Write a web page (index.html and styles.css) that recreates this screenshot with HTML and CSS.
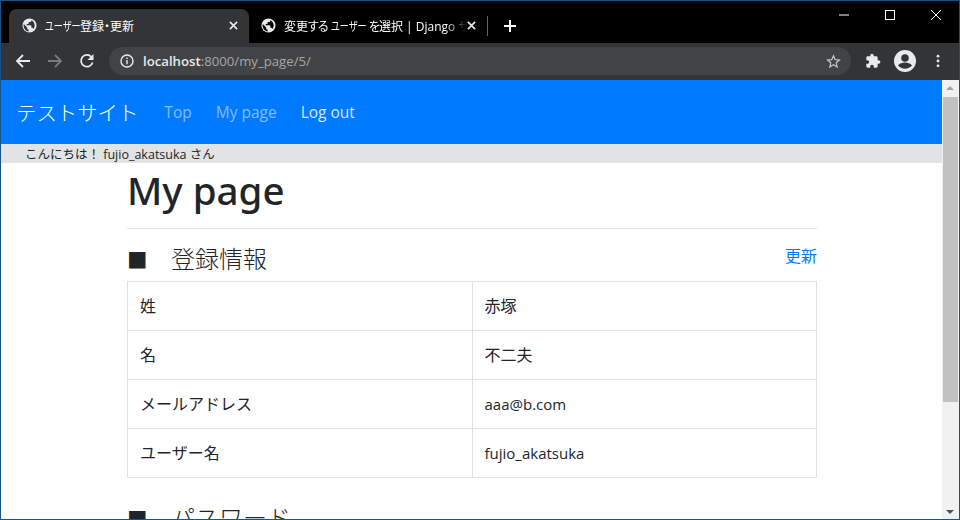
FILE: index.html
```html
<!DOCTYPE html>
<html lang="ja">
<head>
<meta charset="utf-8">
<title>ユーザー登録・更新</title>
<link rel="stylesheet" href="styles.css">
</head>
<body>
<div class="window">
  <div class="titlebar">
    <div class="tab tab-active">
      <svg class="globe" viewBox="0 0 16 16"><circle cx="8" cy="8" r="7.5" fill="#e8eaed"/><path d="M7 14.400C4 14 1.700 11.200 1.700 8c0-.6.1-1 .2-1.500L5.500 10v.8c0 .8.7 1.500 1.500 1.500zM12 11.500c-.2-.6-.7-1-1.300-1H10V8.400c0-.4-.3-.7-.7-.7H5V6.300h1.400c.4 0 .7-.3.700-.7V4.200h1.400c.8 0 1.400-.6 1.400-1.400v-.3c2.100.9 3.600 3 3.600 5.500 0 1.400-.5 2.700-1.500 3.500z" fill="#333436"/></svg>
      <span class="tab-title"><span class="kana">ユーザー</span>登録・更新</span>
      <svg class="tab-x" viewBox="0 0 10 10"><path d="M1 1l8 8M9 1l-8 8" stroke="#e8eaed" stroke-width="1.800"/></svg>
    </div>
    <div class="tab tab-other">
      <svg class="globe" viewBox="0 0 16 16"><circle cx="8" cy="8" r="7.5" fill="#e8eaed"/><path d="M7 14.400C4 14 1.700 11.200 1.700 8c0-.6.1-1 .2-1.500L5.500 10v.8c0 .8.7 1.500 1.500 1.500zM12 11.500c-.2-.6-.7-1-1.300-1H10V8.400c0-.4-.3-.7-.7-.7H5V6.300h1.400c.4 0 .7-.3.700-.7V4.200h1.400c.8 0 1.400-.6 1.400-1.400v-.3c2.100.9 3.600 3 3.600 5.500 0 1.400-.5 2.700-1.500 3.500z" fill="#000"/></svg>
      <span class="tab-title tab-fade">変更<span class="tight">する</span> <span class="kana">ユーザー</span> <span class="tight">を</span>選択 | Django サイト管理</span>
      <svg class="tab-x" viewBox="0 0 10 10"><path d="M1 1l8 8M9 1l-8 8" stroke="#e8eaed" stroke-width="1.800"/></svg>
    </div>
    <span class="tab-sep"></span>
    <svg class="new-tab" viewBox="0 0 12 12"><path d="M6 0v12M0 6h12" stroke="#fff" stroke-width="2"/></svg>
    <div class="win-controls">
      <svg viewBox="0 0 12 12"><path d="M1 6h10" stroke="#fff" stroke-width="1"/></svg>
      <svg viewBox="0 0 12 12"><rect x="1.500" y="1.500" width="9" height="9" fill="none" stroke="#fff"/></svg>
      <svg viewBox="0 0 12 12"><path d="M1 1l10 10M11 1L1 11" stroke="#fff" stroke-width="1"/></svg>
    </div>
  </div>
  <div class="toolbar">
    <svg class="tool" viewBox="0 0 16 16"><path d="M15 8H2M8 2L2 8l6 6" fill="none" stroke="#e8eaed" stroke-width="1.800"/></svg>
    <svg class="tool" viewBox="0 0 16 16"><path d="M1 8h13M8 2l6 6-6 6" fill="none" stroke="#77797b" stroke-width="1.800"/></svg>
    <svg class="tool" viewBox="0 0 16 16"><path d="M13.600 9.500A5.900 5.900 0 1 1 12.300 3.800" fill="none" stroke="#e8eaed" stroke-width="1.800"/><path d="M14.500 1v6h-6z" fill="#e8eaed"/></svg>
    <div class="omnibox">
      <svg class="info" viewBox="0 0 14 14"><circle cx="7" cy="7" r="6" fill="none" stroke="#e8eaed" stroke-width="1.400"/><path d="M7 6v4.200M7 3.600v1.300" stroke="#e8eaed" stroke-width="1.400"/></svg>
      <span class="url"><span class="host">localhost</span>:8000/my_page/5/</span>
      <svg class="star" viewBox="0 0 16 16"><path d="M8 1.800l1.800 4.200 4.500.4-3.400 3 1 4.400L8 11.500l-3.900 2.300 1-4.400-3.400-3 4.500-.4z" fill="none" stroke="#c4c6c8" stroke-width="1.300"/></svg>
    </div>
    <svg class="puzzle" viewBox="0 0 24 24"><path d="M20.500 11H19V7c0-1.100-.9-2-2-2h-4V3.500C13 2.120 11.880 1 10.500 1S8 2.120 8 3.500V5H4c-1.100 0-1.990.9-1.990 2v3.800H3.500c1.490 0 2.700 1.210 2.700 2.700s-1.210 2.700-2.700 2.700H2V20c0 1.100.9 2 2 2h3.800v-1.500c0-1.490 1.210-2.700 2.700-2.700 1.490 0 2.700 1.210 2.700 2.700V22H17c1.100 0 2-.9 2-2v-4h1.500c1.380 0 2.500-1.120 2.500-2.500S21.880 11 20.500 11z" fill="#e8eaed"/></svg>
    <svg class="avatar" viewBox="0 0 22 22"><circle cx="11" cy="11" r="11" fill="#e8eaed"/><circle cx="11" cy="8" r="3.800" fill="#333436"/><path d="M4 15.500c1.500-2.300 4.500-3 7-3s5.500.7 7 3c-1.500 2-4.500 3.200-7 3.200s-5.500-1.200-7-3.200z" fill="#333436"/></svg>
    <svg class="menu" viewBox="0 0 4 16"><circle cx="2" cy="2.500" r="1.600" fill="#e8eaed"/><circle cx="2" cy="8" r="1.600" fill="#e8eaed"/><circle cx="2" cy="13.500" r="1.600" fill="#e8eaed"/></svg>
  </div>
  <div class="viewport">
    <div class="page">
      <nav class="navbar">
        <a class="brand">テストサイト</a>
        <a class="nav-link">Top</a>
        <a class="nav-link">My page</a>
        <a class="nav-link nav-on">Log out</a>
      </nav>
      <div class="greeting">こんにちは！ fujio_akatsuka さん</div>
      <main class="container">
        <h1 class="title">My page</h1>
        <hr class="rule">
        <div class="section-head">
          <h2 class="section-title"><span class="mark">■</span>登録情報</h2>
          <a class="update">更新</a>
        </div>
        <table class="info-table">
          <tr><td>姓</td><td>赤塚</td></tr>
          <tr><td>名</td><td>不二夫</td></tr>
          <tr><td>メールアドレス</td><td class="latin">aaa@b.com</td></tr>
          <tr><td>ユーザー名</td><td class="latin">fujio_akatsuka</td></tr>
        </table>
        <h2 class="section-title next"><span class="mark">■</span>パスワード</h2>
      </main>
    </div>
    <div class="scrollbar">
      <span class="arrow-up"></span>
      <div class="thumb"></div>
      <span class="arrow-down"></span>
    </div>
  </div>
</div>
</body>
</html>
```
FILE: styles.css
```css
* { box-sizing: border-box; }
html, body { margin: 0; padding: 0; width: 960px; height: 520px; overflow: hidden; }
body { font-family: "Open Sans", "Noto Sans CJK JP", sans-serif; color: #212529; }
.window { width: 960px; height: 520px; border: 1px solid #14568c; display: flex; flex-direction: column; overflow: hidden; background: #000; }
.titlebar { height: 42px; flex: none; background: #000; display: flex; align-items: flex-end; padding-left: 8px; position: relative; }
.tab { height: 34px; display: flex; align-items: center; color: #fff; font-size: 12px; flex: none; padding-bottom: 1px; }
.tab-active { width: 240px; background: #333436; border-radius: 8px 8px 0 0; padding-left: 13px; padding-right: 11px; }
.tab-other { width: 236px; padding-left: 12px; padding-right: 9px; }
.globe { width: 15px; height: 15px; flex: none; margin-right: 8px; }
.tab-title { flex: 1; min-width: 0; white-space: nowrap; overflow: hidden; font-family: "Open Sans", "Noto Sans CJK JP", sans-serif; font-feature-settings: "palt"; }
.kana { display: inline-block; width: 35px; transform: scaleX(.76); transform-origin: left center; }
.tight { letter-spacing: -1px; }
.tab-fade { -webkit-mask-image: linear-gradient(to right, #000 88%, transparent 100%); mask-image: linear-gradient(to right, #000 88%, transparent 100%); }
.tab-x { width: 9px; height: 9px; flex: none; }
.tab-sep { width: 1px; height: 20px; background: #5f6368; margin: 0 0 7px 2px; flex: none; }
.new-tab { width: 12px; height: 12px; margin: 0 0 11px 16px; flex: none; }
.win-controls { position: absolute; top: 8px; right: 17px; display: flex; gap: 34px; }
.win-controls svg { width: 12px; height: 12px; display: block; }
.toolbar { height: 37px; flex: none; background: #333436; display: flex; align-items: center; padding: 0 0 1px 14px; }
.tool { width: 16px; height: 16px; flex: none; margin-right: 16px; }
.omnibox { width: 742px; height: 28px; margin-left: -2px; background: #424345; border-radius: 14px; display: flex; align-items: center; padding: 0 10px 0 11px; flex: none; }
.info { width: 14px; height: 14px; flex: none; margin-right: 9px; }
.url { flex: 1; font-size: 13.200px; color: #a5a7a9; font-family: "Open Sans", sans-serif; }
.host { color: #e8eaed; font-weight: 600; }
.star { width: 15px; height: 15px; flex: none; }
.puzzle { width: 16px; height: 16px; flex: none; margin-left: 14px; }
.avatar { width: 22px; height: 22px; flex: none; margin-left: 13px; }
.menu { width: 4px; height: 14px; flex: none; margin-left: 20px; }
.viewport { flex: 1; min-height: 0; display: flex; background: #fff; }
.page { flex: 1; min-width: 0; overflow: hidden; }
.navbar { height: 64px; background: #007bff; display: flex; align-items: center; padding-left: 15px; }
.brand { font-size: 20.400px; color: #fff; font-family: "Noto Sans CJK JP", sans-serif; font-weight: 300; margin-right: 26px; }
.nav-link { font-size: 15.500px; color: rgba(255,255,255,.5); margin-right: 24px; }
.nav-on { color: rgba(255,255,255,.85); }
.greeting { height: 19px; background: #e2e3e5; padding-left: 24px; font-size: 12.500px; line-height: 21px; white-space: nowrap; }
.container { width: 690px; margin-left: 126px; }
.title { font-size: 38.500px; font-weight: 500; line-height: 48px; margin: 3px 0 0; font-family: "Noto Sans", sans-serif; }
.rule { border: 0; border-top: 1px solid #e3e3e3; margin: 14px 0 11px; }
.section-head { display: flex; justify-content: space-between; align-items: flex-start; height: 41px; }
.section-title { font-size: 24px; font-weight: 300; line-height: 36px; margin: 0; font-family: "Noto Sans CJK JP", sans-serif; }
.mark { display: inline-block; width: 44px; font-size: 20.500px; }
.update { font-size: 16px; color: #007bff; font-family: "Noto Sans CJK JP", sans-serif; line-height: 24px; padding-top: 3px; }
.info-table { width: 100%; border-collapse: collapse; table-layout: fixed; font-size: 16px; }
.info-table td { border: 1px solid #dee2e6; height: 49px; padding: 0 12px 2px; }
.info-table .latin { font-size: 15px; padding-bottom: 0; }
.next { margin-top: 21px; }
.scrollbar { width: 17px; flex: none; background: #f1f1f1; position: relative; display: flex; flex-direction: column; align-items: center; padding-top: 17px; }
.thumb { width: 15px; height: 305px; background: #c1c1c1; }
.arrow-up { position: absolute; top: 6px; left: 4px; border: 4px solid transparent; border-top: 0; border-bottom: 4px solid #a3a3a3; }
.arrow-down { position: absolute; bottom: 5px; left: 4px; border: 4px solid transparent; border-bottom: 0; border-top: 4px solid #505050; }
```
